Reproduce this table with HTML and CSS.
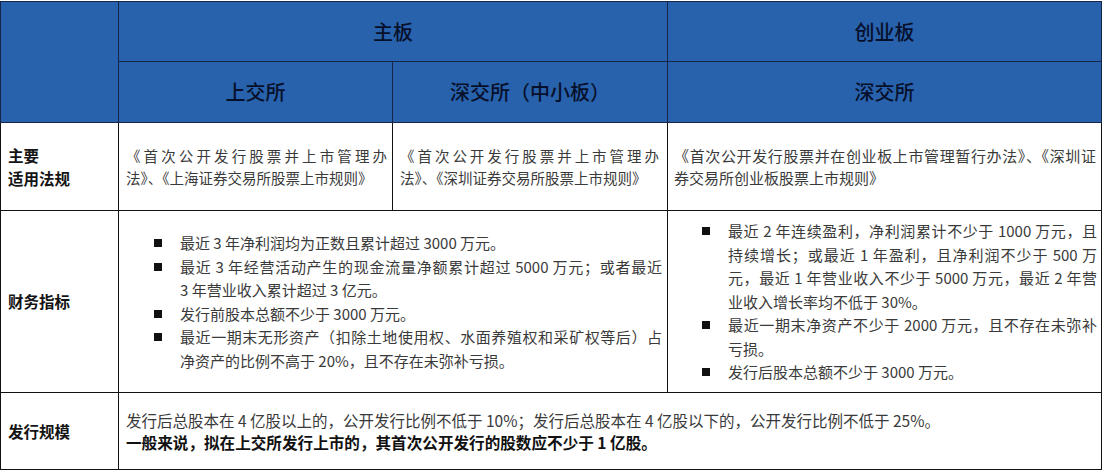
FILE: index.html
```html
<!DOCTYPE html>
<html lang="zh-CN">
<head>
<meta charset="utf-8">
<title>主板与创业板上市条件对比</title>
<link rel="stylesheet" href="styles.css">
</head>
<body>
<table class="cmp">
  <colgroup>
    <col class="c1"><col class="c2"><col class="c3"><col class="c4">
  </colgroup>
  <thead>
    <tr class="h-top">
      <th class="corner" rowspan="2"></th>
      <th colspan="2">主板</th>
      <th>创业板</th>
    </tr>
    <tr class="h-sub">
      <th>上交所</th>
      <th>深交所（中小板）</th>
      <th>深交所</th>
    </tr>
  </thead>
  <tbody>
    <tr class="r-law">
      <td class="label">主要<br>适用法规</td>
      <td class="law"><span class="jl">《首次公开发行股票并上市管理办</span><span class="ln">法》、《上海证券交易所股票上市规则》</span></td>
      <td class="law law-mid"><span class="jl">《首次公开发行股票并上市管理办</span><span class="ln">法》、《深圳证券交易所股票上市规则》</span></td>
      <td class="law law-gem"><span class="jl">《首次公开发行股票并在创业板上市管理暂行办法》、《深圳证</span><span class="ln">券交易所创业板股票上市规则》</span></td>
    </tr>
    <tr class="r-fin">
      <td class="label">财务指标</td>
      <td class="fin" colspan="2">
        <ul class="bl">
          <li><div class="txt"><span class="ln">最近 3 年净利润均为正数且累计超过 3000 万元。</span></div></li>
          <li><div class="txt"><span class="jl">最近 3 年经营活动产生的现金流量净额累计超过 5000 万元；或者最近</span><span class="ln">3 年营业收入累计超过 3 亿元。</span></div></li>
          <li><div class="txt"><span class="ln">发行前股本总额不少于 3000 万元。</span></div></li>
          <li><div class="txt"><span class="jl">最近一期末无形资产（扣除土地使用权、水面养殖权和采矿权等后）占</span><span class="ln">净资产的比例不高于 20%，且不存在未弥补亏损。</span></div></li>
        </ul>
      </td>
      <td class="fin fin-gem">
        <ul class="bl">
          <li><div class="txt"><span class="jl">最近 2 年连续盈利，净利润累计不少于 1000 万元，且</span><span class="jl">持续增长；或最近 1 年盈利，且净利润不少于 500 万</span><span class="jl">元，最近 1 年营业收入不少于 5000 万元，最近 2 年营</span><span class="ln">业收入增长率均不低于 30%。</span></div></li>
          <li><div class="txt"><span class="jl">最近一期末净资产不少于 2000 万元，且不存在未弥补</span><span class="ln">亏损。</span></div></li>
          <li><div class="txt"><span class="ln">发行后股本总额不少于 3000 万元。</span></div></li>
        </ul>
      </td>
    </tr>
    <tr class="r-scale">
      <td class="label">发行规模</td>
      <td class="scale" colspan="3"><span class="ln">发行后总股本在 4 亿股以上的，公开发行比例不低于 10%；发行后总股本在 4 亿股以下的，公开发行比例不低于 25%。</span><span class="ln strong">一般来说，拟在上交所发行上市的，其首次公开发行的股数应不少于 1 亿股。</span></td>
    </tr>
  </tbody>
</table>
</body>
</html>
```

FILE: styles.css
```css
* { box-sizing: border-box; }

html, body {
  margin: 0;
  padding: 0;
  background: #ffffff;
}

body {
  padding-top: 1px;
  font-family: "Noto Sans CJK SC", "Noto Sans", sans-serif;
  color: #3a3a3a;
}

.cmp {
  border-collapse: collapse;
  table-layout: fixed;
  width: 1101px;
}

.c1 { width: 118px; }
.c2 { width: 274px; }
.c3 { width: 275px; }
.c4 { width: 434px; }

.cmp :where(th, td) {
  border: 1px solid #111111;
  padding: 0;
  vertical-align: middle;
}

/* header */
.cmp thead th {
  background: #2862ad;
  border-color: #16264a;
  color: #07102a;
  font-size: 20px;
  font-weight: 500;
  text-align: center;
  line-height: 26px;
}

.h-top { height: 60px; }
.h-sub { height: 61px; }

/* body rows */
.r-law { height: 88px; }
.r-fin { height: 182px; }
.r-scale { height: 77px; }

.cmp .label {
  padding-left: 7px;
  font-size: 15.5px;
  font-weight: 700;
  line-height: 23px;
  color: #141414;
}

.jl {
  display: block;
  white-space: nowrap;
  text-align: justify;
  text-align-last: justify;
}

.ln {
  display: block;
  white-space: nowrap;
}

.cmp .law {
  padding: 0 5px 0 7px;
  font-size: 14.5px;
  line-height: 22px;
}

.cmp .law-mid { padding: 0 8px 0 7px; }
.cmp .law-gem { padding: 0 5px 0 6px; font-size: 15px; }

/* finance bullets */
.cmp .fin {
  padding: 0 5px 0 35px;
  font-size: 15px;
  line-height: 23.5px;
}

.cmp .fin-gem { padding: 0 4px 0 34px; }

.bl {
  list-style: none;
  margin: 0;
  padding: 0;
}

.bl li {
  display: flex;
}

.bl li::before {
  content: "";
  flex: none;
  width: 8px;
  height: 8px;
  margin: 8px 18px 0 0;
  background: #111111;
}

.txt {
  flex: 1;
  min-width: 0;
}

/* issue scale */
.cmp .scale {
  padding: 0 6px 0 7px;
  font-size: 15.5px;
  line-height: 22px;
}

.strong {
  font-size: 15.6px;
  font-weight: 700;
  color: #111111;
}
```
